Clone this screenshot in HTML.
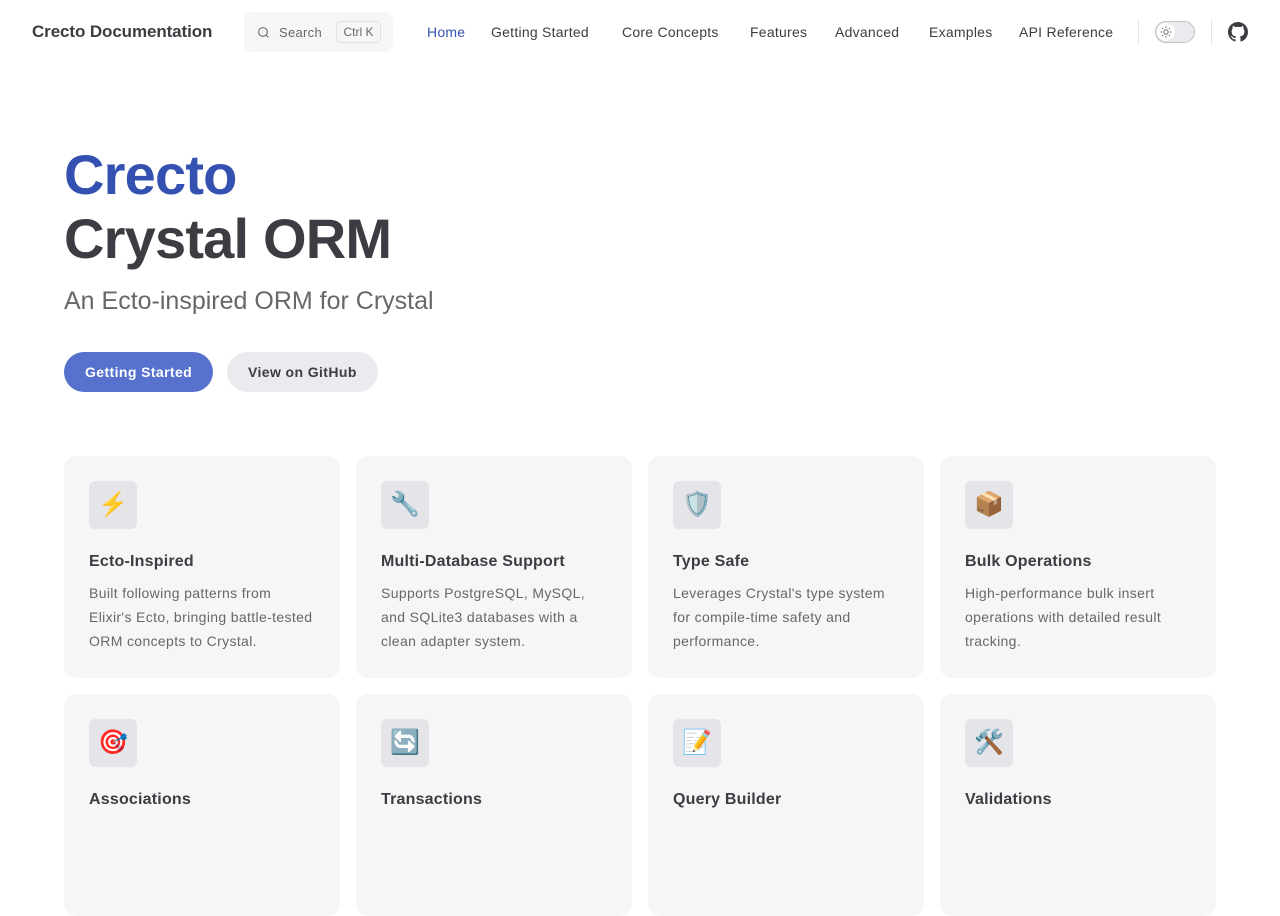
<!DOCTYPE html>
<html><head><meta charset="utf-8"><style>
*{box-sizing:border-box;margin:0;padding:0}
html,body{width:1280px;height:800px;overflow:hidden}
body{background:#fff;font-family:"Liberation Sans","Noto Sans CJK SC",sans-serif;color:#3c3c43}
.nav{height:64px;position:relative}
.title{position:absolute;left:32px;top:22px;font-size:17px;font-weight:600;color:#3c3c43;letter-spacing:-.1px}
.search{position:absolute;left:244px;top:12px;width:149px;height:40px;background:#f6f6f7;border-radius:8px}
.search span.t{position:absolute;left:35px;top:13px;font-size:13px;color:#67676c;letter-spacing:.3px}
.kbd{position:absolute;left:92px;top:9px;width:45px;height:22px;border:1px solid #e2e2e3;border-radius:4px;font-size:12px;color:#67676c;text-align:center;line-height:20px}
.links{position:absolute;top:24px;font-size:14px;font-weight:500;color:#3c3c43;letter-spacing:.25px}
.links a{position:absolute;white-space:nowrap;text-decoration:none;color:#3c3c43}
.sep{position:absolute;top:20px;width:1px;height:24px;background:#e2e2e3}
.sw{position:absolute;left:1155px;top:21px;width:40px;height:22px;border:1px solid #c2c2c4;border-radius:11px;background:#ebebef}
.sw i{position:absolute;left:1px;top:1px;width:18px;height:18px;border-radius:50%;background:#fff;box-shadow:0 1px 2px rgba(0,0,0,.06)}
h1{position:absolute;left:64px;top:143px;font-size:56px;line-height:64px;font-weight:700;letter-spacing:-.8px}
.tag{position:absolute;left:64px;top:287px;font-size:25px;color:#67676c;letter-spacing:0}
.btn{position:absolute;top:352px;height:40px;border-radius:20px;font-size:14px;font-weight:600;line-height:40px;padding:0 21px;letter-spacing:.4px}
.card{position:absolute;width:276px;height:222px;background:#f6f6f7;border-radius:12px;padding:25px}
.ic{width:48px;height:48px;border-radius:6px;background:#e4e4e9;font-size:24px;line-height:48px;text-align:center}
.card h3{font-size:16px;font-weight:600;margin-top:21px;line-height:24px;color:#3c3c43;letter-spacing:.2px}
.card p{font-size:14px;line-height:24px;color:#67676c;margin-top:7px;width:228px;letter-spacing:.35px}
</style></head><body>
<div class="nav">
<div class="title">Crecto Documentation</div>
<div class="search"><svg style="position:absolute;left:13px;top:14px" width="13" height="13" viewBox="0 0 24 24" fill="none" stroke="#67676c" stroke-width="2"><circle cx="11" cy="11" r="8"/><path d="M21 21l-4.3-4.3"/></svg><span class="t">Search</span><div class="kbd">Ctrl K</div></div>
<div class="links">
<a style="left:427px;color:#3451b2">Home</a><a style="left:491px">Getting Started</a><a style="left:622px">Core Concepts</a><a style="left:750px">Features</a><a style="left:835px">Advanced</a><a style="left:929px">Examples</a><a style="left:1019px">API Reference</a></div>
<div class="sep" style="left:1138px"></div>
<div class="sw"><i><svg width="18" height="18" viewBox="0 0 18 18" stroke="#67676c" stroke-width="1"><circle cx="9" cy="9" r="2.2" fill="none"/><path d="M9 3.5v1.5M9 13v1.5M3.5 9h1.5M13 9h1.5M5.1 5.1l1 1M11.9 11.9l1 1M5.1 12.9l1-1M11.9 6.1l1-1"/></svg></i></div>
<div class="sep" style="left:1211px"></div>
<svg style="position:absolute;left:1228px;top:22px" width="20" height="20" viewBox="0 0 16 16" fill="#3c3c43"><path d="M8 0C3.58 0 0 3.58 0 8c0 3.54 2.29 6.53 5.47 7.59.4.07.55-.17.55-.38 0-.19-.01-.82-.01-1.49-2.01.37-2.53-.49-2.69-.94-.09-.23-.48-.94-.82-1.13-.28-.15-.68-.52-.01-.53.63-.01 1.08.58 1.23.82.72 1.21 1.87.87 2.33.66.07-.52.28-.87.51-1.07-1.78-.2-3.64-.89-3.64-3.95 0-.87.31-1.59.82-2.15-.08-.2-.36-1.02.08-2.12 0 0 .67-.21 2.2.82.64-.18 1.32-.27 2-.27.68 0 1.36.09 2 .27 1.53-1.04 2.2-.82 2.2-.82.44 1.1.16 1.92.08 2.12.51.56.82 1.27.82 2.15 0 3.07-1.87 3.75-3.65 3.95.29.25.54.73.54 1.48 0 1.07-.01 1.93-.01 2.2 0 .21.15.46.55.38A8.013 8.013 0 0016 8c0-4.42-3.58-8-8-8z"/></svg>
</div>
<h1><span style="color:#3451b2">Crecto</span><br>Crystal ORM</h1>
<div class="tag">An Ecto-inspired ORM for Crystal</div>
<div class="btn" style="left:64px;background:#5672cd;color:#fff">Getting Started</div>
<div class="btn" style="left:227px;background:#ebebef;color:#3c3c43">View on GitHub</div>
<div class="card" style="left:64px;top:456px"><div class="ic">⚡</div><h3>Ecto-Inspired</h3><p>Built following patterns from Elixir's Ecto, bringing battle-tested ORM concepts to Crystal.</p></div>
<div class="card" style="left:356px;top:456px"><div class="ic">🔧</div><h3>Multi-Database Support</h3><p>Supports PostgreSQL, MySQL, and SQLite3 databases with a clean adapter system.</p></div>
<div class="card" style="left:648px;top:456px"><div class="ic">🛡️</div><h3>Type Safe</h3><p>Leverages Crystal's type system for compile-time safety and performance.</p></div>
<div class="card" style="left:940px;top:456px"><div class="ic">📦</div><h3>Bulk Operations</h3><p>High-performance bulk insert operations with detailed result tracking.</p></div>
<div class="card" style="left:64px;top:694px"><div class="ic">🎯</div><h3>Associations</h3></div>
<div class="card" style="left:356px;top:694px"><div class="ic">🔄</div><h3>Transactions</h3></div>
<div class="card" style="left:648px;top:694px"><div class="ic">📝</div><h3>Query Builder</h3></div>
<div class="card" style="left:940px;top:694px"><div class="ic">🛠️</div><h3>Validations</h3></div>
</body></html>
